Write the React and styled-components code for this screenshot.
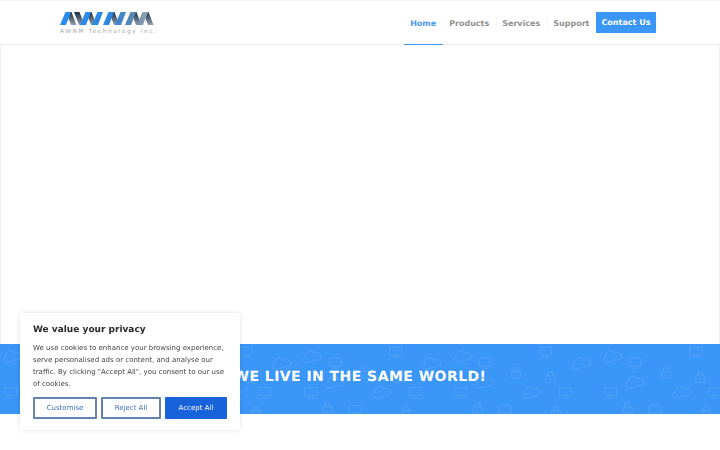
import React from "react"
import styled, { createGlobalStyle } from "styled-components"

const GlobalStyle = createGlobalStyle`
  html, body {
    margin: 0;
    padding: 0;
    height: 100%;
    overflow: hidden;
    background: #fff;
    font-family: "DejaVu Sans", Verdana, sans-serif;
    text-rendering: geometricPrecision;
  }
`

const Page = styled.div`
  width: 720px;
  height: 450px;
  display: flex;
  flex-direction: column;
`

const Header = styled.header`
  height: 45px;
  flex: none;
  display: flex;
  align-items: stretch;
  justify-content: space-between;
  padding: 0 64px 0 60px;
  border-top: 1px solid #f4f4f4;
  border-bottom: 1px solid #ececec;
  box-sizing: border-box;
`

const Brand = styled.div`
  display: flex;
  flex-direction: column;
  padding-top: 9px;
`

const BrandName = styled.span`
  margin-top: 1px;
  font-size: 5.8px;
  letter-spacing: 1.62px;
  line-height: 8px;
  color: #a8a8a8;
  white-space: nowrap;
`

const Nav = styled.nav`
  display: flex;
  align-items: stretch;
`

const NavItem = styled.a`
  display: flex;
  align-items: center;
  padding: 0 6.5px;
  font-size: 8px;
  font-weight: 700;
  color: ${(props) => (props.$active ? "#4a9bee" : "#919191")};
  box-shadow: ${(props) => (props.$active ? "inset 0 -1px 0 #3c96f0" : "none")};
  margin-bottom: -1px;
  position: relative;
  & + &::before {
    content: "";
    position: absolute;
    left: 0;
    top: 16px;
    height: 11px;
    width: 1px;
    background: #f4f4f4;
  }
`

const ContactButton = styled.a`
  align-self: flex-start;
  margin: 11px 0 0 0;
  height: 21px;
  padding: 0 5.6px;
  display: flex;
  align-items: center;
  background: #3a96f7;
  color: #fff;
  font-size: 8px;
  font-weight: 700;
`

const Hero = styled.div`
  height: 299px;
  flex: none;
  box-sizing: border-box;
  border-left: 1px solid #f2f2f2;
  border-right: 1px solid #f2f2f2;
`

const Band = styled.section`
  position: relative;
  height: 70px;
  flex: none;
  background: #3a96f7;
  display: flex;
  align-items: center;
  justify-content: center;
  overflow: hidden;
`

const BandPattern = styled.svg`
  position: absolute;
  inset: 0;
  width: 100%;
  height: 100%;
  fill: none;
  stroke: #ffffff;
  stroke-opacity: 0.1;
  stroke-width: 1.2;
  filter: blur(0.4px);
`

const BandTitle = styled.h2`
  position: relative;
  margin: 0 0 4px;
  font-size: 14px;
  font-weight: 700;
  letter-spacing: 0.45px;
  color: #fff;
  white-space: nowrap;
`

const CookieCard = styled.div`
  position: fixed;
  left: 20px;
  top: 313px;
  width: 220px;
  height: 117px;
  box-sizing: border-box;
  padding: 11px 13px 0;
  background: #fff;
  border-radius: 3px;
  box-shadow: 0 0 5px rgba(0, 0, 0, 0.12);
`

const CookieTitle = styled.div`
  font-size: 9px;
  font-weight: 700;
  line-height: 12px;
  color: #2a2a2a;
`

const CookieText = styled.p`
  margin: 6px 0 0;
  font-size: 7px;
  line-height: 12px;
  color: #444;
  white-space: nowrap;
`

const CookieActions = styled.div`
  display: flex;
  gap: 4px;
  margin-top: 7px;
`

const CookieButton = styled.button`
  width: ${(props) => props.$w}px;
  height: 22px;
  padding: 0;
  box-sizing: border-box;
  font-family: inherit;
  font-size: 7px;
  border-radius: 1px;
  border: 2px solid ${(props) => (props.$solid ? "#1863dc" : "#6484b0")};
  background: ${(props) => (props.$solid ? "#1863dc" : "#fff")};
  color: ${(props) => (props.$solid ? "#fff" : "#3a6fc4")};
`

// letters of the mark as zigzag strokes: up strokes are blue, down strokes dark
const UP_STROKES = [0, 20, 32, 43, 55, 65, 77]
const DOWN_STROKES = [6, 14, 26, 49, 71, 83]

const Logo = () => (
  <svg width="94" height="17" viewBox="0 0 94 17">
    <defs>
      <linearGradient id="logoFill" x1="0" y1="0" x2="93" y2="0" gradientUnits="userSpaceOnUse">
        <stop offset="0" stopColor="#2a8cf0" />
        <stop offset="0.55" stopColor="#2d86e0" />
        <stop offset="0.8" stopColor="#5d87ad" />
        <stop offset="1" stopColor="#b0b0b0" />
      </linearGradient>
      <linearGradient id="logoDark" x1="0" y1="2" x2="0" y2="15" gradientUnits="userSpaceOnUse">
        <stop offset="0" stopColor="#1a2c42" />
        <stop offset="1" stopColor="#93a0ae" />
      </linearGradient>
    </defs>
    <g fill="url(#logoDark)">
      {DOWN_STROKES.map((x) => (
        <path key={x} d={`M${x} 2 h5.5 l5 13 h-5.5Z`} />
      ))}
    </g>
    <g fill="url(#logoFill)">
      {UP_STROKES.map((x) => (
        <path key={x} d={`M${x} 15 l5.5 -13 h5.5 l-5 13Z`} />
      ))}
    </g>
  </svg>
)

const MONITORS = [[65.6, 7.6], [5, 18.6], [85, 48], [130.6, 48], [25, 66]]
const CLOUDS = [[101.6, 18.6], [132.6, 12], [52, 47.6], [5, 37.6]]
const LOCKS = [[36, 28.6], [70.6, 33], [76, 67.6], [147.6, 64]]
const TILES = [-1, 0, 1, 2, 3, 4, 5]

const Monitor = ({ x, y }) => (
  <g transform={`translate(${x} ${y})`}>
    <rect x="-6" y="-4.5" width="12" height="8" rx="1" />
    <path d="M-3 5.5H3" />
  </g>
)

const Cloud = ({ x, y }) => (
  <path
    transform={`translate(${x} ${y}) rotate(-14)`}
    d="M-7 5 C-11 5 -11 -1 -7 -1 C-6 -6 1 -7 3 -2 C7 -3 10 1 8 4 C7 5 6 5 5 5Z"
  />
)

const Lock = ({ x, y }) => (
  <g transform={`translate(${x} ${y})`}>
    <rect x="-4.5" y="-1" width="9" height="6.5" rx="1" />
    <path d="M-2.5 -1 V-3 A2.5 2.5 0 0 1 2.5 -3 V-1" />
    <path d="M0 1.5V3.5" />
  </g>
)

export default function App() {
  return (
    <Page>
      <GlobalStyle />
      <Header>
        <Brand>
          <Logo />
          <BrandName>AWNM Technology Inc.</BrandName>
        </Brand>
        <Nav>
          <NavItem $active>Home</NavItem>
          <NavItem>Products</NavItem>
          <NavItem>Services</NavItem>
          <NavItem>Support</NavItem>
          <ContactButton>Contact Us</ContactButton>
        </Nav>
      </Header>
      <Hero />
      <Band>
        <BandPattern viewBox="0 0 720 70">
          {TILES.map((k) => (
            <g key={k} transform={`translate(${30 + k * 150} 0)`}>
              {MONITORS.map(([x, y], i) => <Monitor key={i} x={x} y={y} />)}
              {CLOUDS.map(([x, y], i) => <Cloud key={i} x={x} y={y} />)}
              {LOCKS.map(([x, y], i) => <Lock key={i} x={x} y={y} />)}
            </g>
          ))}
        </BandPattern>
        <BandTitle>WE LIVE IN THE SAME WORLD!</BandTitle>
      </Band>
      <CookieCard>
        <CookieTitle>We value your privacy</CookieTitle>
        <CookieText>
          We use cookies to enhance your browsing experience,<br />
          serve personalised ads or content, and analyse our<br />
          traffic. By clicking "Accept All", you consent to our use<br />
          of cookies.
        </CookieText>
        <CookieActions>
          <CookieButton $w={64}>Customise</CookieButton>
          <CookieButton $w={60}>Reject All</CookieButton>
          <CookieButton $w={62} $solid>Accept All</CookieButton>
        </CookieActions>
      </CookieCard>
    </Page>
  )
}
